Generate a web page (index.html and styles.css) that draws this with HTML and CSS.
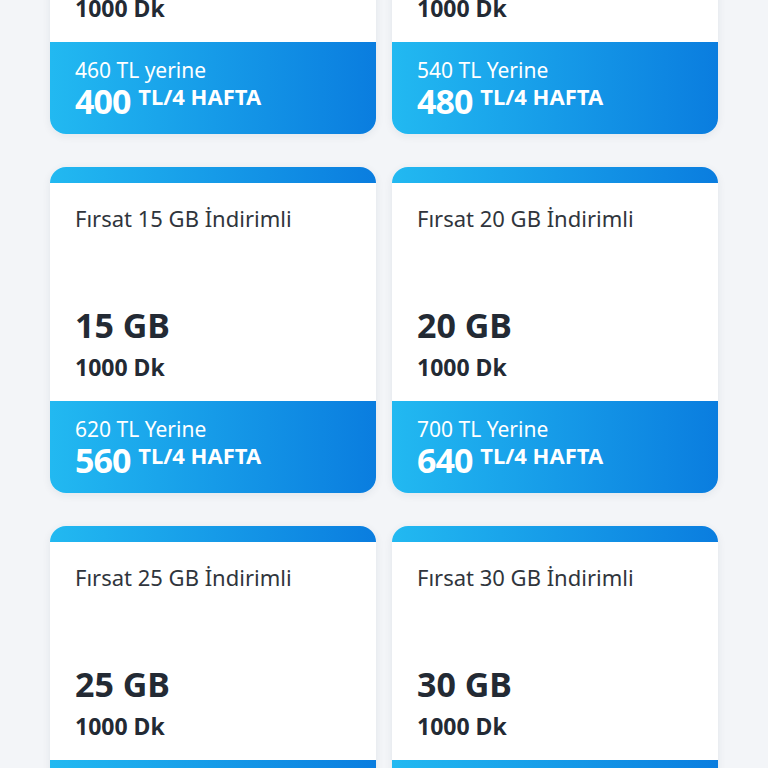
FILE: index.html
```html
<!DOCTYPE html>
<html lang="tr">
<head>
    <meta charset="UTF-8">
    <meta name="viewport" content="width=device-width, initial-scale=1.0">
    <title>Fırsat Paketleri</title>
    <link rel="stylesheet" href="styles.css">
</head>
<body>
    <div class="packages">
        <div class="card">
            <div class="card-strip"></div>
            <div class="card-body">
                <p class="card-title">Fırsat 5 GB İndirimli</p>
                <div class="card-amount">
                    <p class="gb">5 GB</p>
                    <p class="minutes">1000 Dk</p>
                </div>
            </div>
            <div class="card-price">
                <p class="old-price">460 TL yerine</p>
                <p class="new-price">400 <span class="unit">TL/4 HAFTA</span></p>
            </div>
        </div>
        <div class="card">
            <div class="card-strip"></div>
            <div class="card-body">
                <p class="card-title">Fırsat 10 GB İndirimli</p>
                <div class="card-amount">
                    <p class="gb">10 GB</p>
                    <p class="minutes">1000 Dk</p>
                </div>
            </div>
            <div class="card-price">
                <p class="old-price">540 TL Yerine</p>
                <p class="new-price">480 <span class="unit">TL/4 HAFTA</span></p>
            </div>
        </div>

        <div class="card">
            <div class="card-strip"></div>
            <div class="card-body">
                <p class="card-title">Fırsat 15 GB İndirimli</p>
                <div class="card-amount">
                    <p class="gb">15 GB</p>
                    <p class="minutes">1000 Dk</p>
                </div>
            </div>
            <div class="card-price">
                <p class="old-price">620 TL Yerine</p>
                <p class="new-price">560 <span class="unit">TL/4 HAFTA</span></p>
            </div>
        </div>
        <div class="card">
            <div class="card-strip"></div>
            <div class="card-body">
                <p class="card-title">Fırsat 20 GB İndirimli</p>
                <div class="card-amount">
                    <p class="gb">20 GB</p>
                    <p class="minutes">1000 Dk</p>
                </div>
            </div>
            <div class="card-price">
                <p class="old-price">700 TL Yerine</p>
                <p class="new-price">640 <span class="unit">TL/4 HAFTA</span></p>
            </div>
        </div>

        <div class="card">
            <div class="card-strip"></div>
            <div class="card-body">
                <p class="card-title">Fırsat 25 GB İndirimli</p>
                <div class="card-amount">
                    <p class="gb">25 GB</p>
                    <p class="minutes">1000 Dk</p>
                </div>
            </div>
            <div class="card-price">
                <p class="old-price">780 TL Yerine</p>
                <p class="new-price">720 <span class="unit">TL/4 HAFTA</span></p>
            </div>
        </div>
        <div class="card">
            <div class="card-strip"></div>
            <div class="card-body">
                <p class="card-title">Fırsat 30 GB İndirimli</p>
                <div class="card-amount">
                    <p class="gb">30 GB</p>
                    <p class="minutes">1000 Dk</p>
                </div>
            </div>
            <div class="card-price">
                <p class="old-price">860 TL Yerine</p>
                <p class="new-price">800 <span class="unit">TL/4 HAFTA</span></p>
            </div>
        </div>
    </div>
</body>
</html>
```

FILE: styles.css
```css
body {
    margin: 0;
    background: #f3f5f8;
    font-family: 'Noto Sans', 'Lato', sans-serif;
    color: #232a34;
    overflow: hidden;
    height: 100vh;
}

p {
    margin: 0;
}

/* page is scrolled: first row is partly above the top edge */
.packages {
    display: grid;
    grid-template-columns: 1fr 1fr;
    column-gap: 16px;
    row-gap: 33px;
    padding: 0 50px;
    margin-top: -192px;
}

.card {
    height: 326px;
    display: flex;
    flex-direction: column;
    background: #fff;
    border-radius: 16px;
    overflow: hidden;
    box-shadow: 0 2px 8px rgba(30, 50, 80, 0.08);
}

.card-strip {
    height: 16px;
    flex-shrink: 0;
    background: linear-gradient(to right, #22b9f1, #0a7ddf);
}

.card-body {
    flex: 1;
    display: flex;
    flex-direction: column;
    justify-content: space-between;
    padding: 22px 25px 20px;
}

.card-title {
    font-size: 22px;
    line-height: 26px;
    color: #30353c;
}

.gb {
    font-size: 34px;
    font-weight: 700;
    line-height: 40px;
    margin-bottom: 8px;
}

.minutes {
    font-size: 23px;
    font-weight: 700;
    line-height: 28px;
}

.card-price {
    height: 92px;
    flex-shrink: 0;
    box-sizing: border-box;
    padding: 16px 25px 0;
    background: linear-gradient(to right, #22b9f1, #0a7ddf);
    color: #fff;
}

.old-price {
    font-size: 21px;
    line-height: 25px;
}

.new-price {
    font-size: 34px;
    font-weight: 700;
    line-height: 36px;
    letter-spacing: -1px;
}

.unit {
    font-size: 22px;
    vertical-align: top;
    line-height: 26px;
    letter-spacing: 0;
}
```
